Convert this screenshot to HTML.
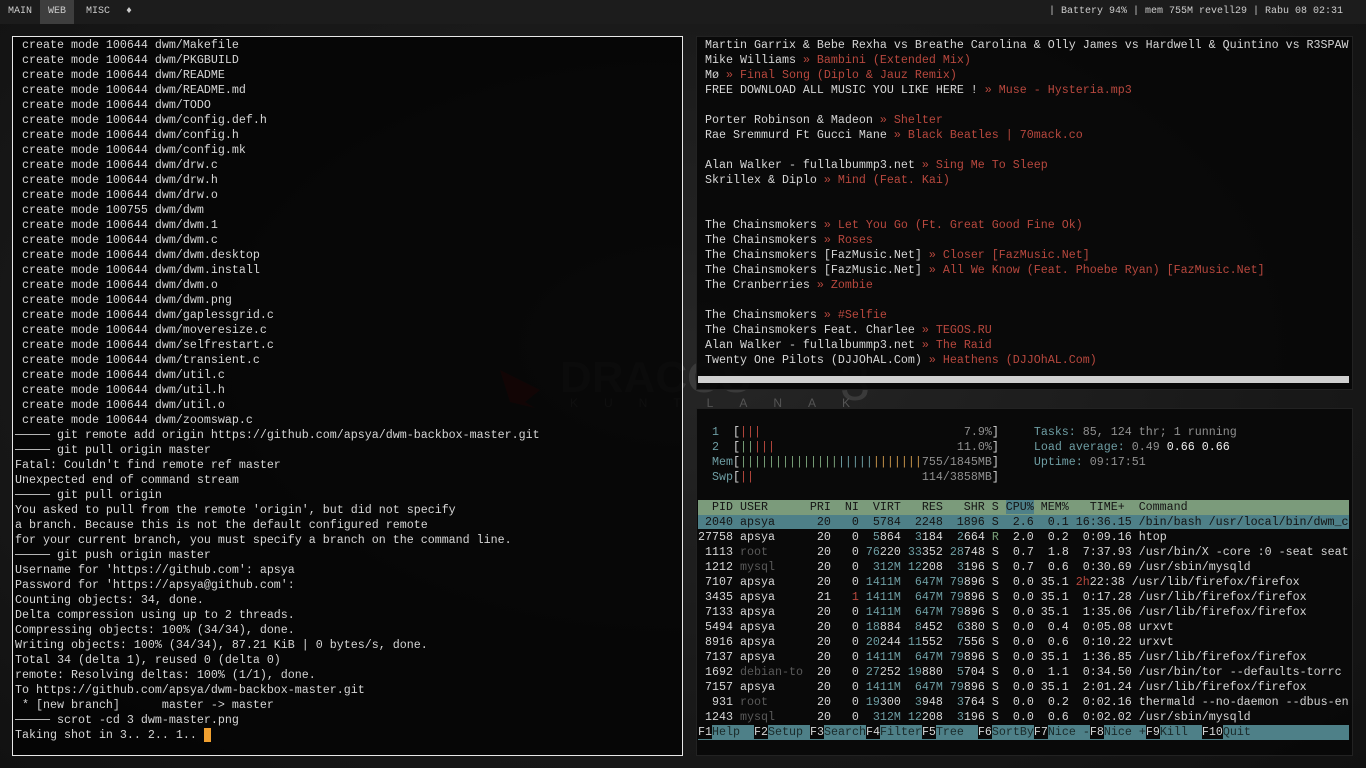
<!DOCTYPE html>
<html><head><meta charset="utf-8"><style>
*{margin:0;padding:0;box-sizing:border-box}
body{width:1366px;height:768px;overflow:hidden;background:radial-gradient(ellipse at 50% 45%,#262626 0%,#1a1a1a 55%,#111 100%);font-family:"Liberation Mono","DejaVu Sans Mono",monospace;position:relative;color:#d6d6d6}
.bar{position:absolute;left:0;top:0;width:1366px;height:24px;background:#1c1c1c;font-size:10px;line-height:24px;color:#ccc}
.bar span{position:absolute;top:0}
pre{font-family:"Liberation Mono","DejaVu Sans Mono",monospace;font-size:11.67px;line-height:15px;white-space:pre;position:absolute}
.logo{position:absolute;left:480px;top:350px;width:420px;height:60px}
.left{position:absolute;left:12px;top:36px;width:671px;height:720px;border:1px solid #e8e8e8;background:rgba(4,4,4,0.86)}
.rt{position:absolute;left:696px;top:36px;width:657px;height:354px;background:rgba(8,8,8,0.92);border:1px solid #222}
.rb{position:absolute;left:696px;top:408px;width:657px;height:348px;background:rgba(8,8,8,0.95);border:1px solid #222}
.r{color:#b8483e}.t{color:#6e9ea4}.g{color:#5a5a5a}.gr{color:#7ba37a}.w{color:#eee}.m{color:#909090}
.hdr{background:#7b9b7b;color:#141414}.sel{background:#4e8088;color:#141414}
.fk{background:#4e8088;color:#1a2a2a}
</style></head><body>
<div class="bar">
<span style="left:0;width:40px;text-align:center">MAIN</span>
<span style="left:40px;width:34px;background:#3e3e3e;text-align:center">WEB</span>
<span style="left:86px">MISC</span>
<span style="left:126px">♦</span>
<span style="left:1049px">| Battery 94%  | mem 755M revell29  | Rabu 08 02:31</span>
</div>
<svg class="logo" viewBox="0 0 420 60">
<path d="M20 20 L60 40 L45 52 L55 58 L30 52 Z" fill="#6a0f0f"/>
<text x="80" y="42" font-family="Liberation Sans" font-weight="bold" font-size="44" fill="#3a3a3a">DRACOS</text>
<text x="360" y="50" font-family="Liberation Sans" font-size="54" fill="#3a3a3a">3</text>
<text x="90" y="57" font-family="Liberation Sans" font-size="12" fill="#555" letter-spacing="26">KUNTLANAK</text>
</svg>
<div class="left"></div>
<pre style="left:15px;top:37.5px"> create mode 100644 dwm/Makefile
 create mode 100644 dwm/PKGBUILD
 create mode 100644 dwm/README
 create mode 100644 dwm/README.md
 create mode 100644 dwm/TODO
 create mode 100644 dwm/config.def.h
 create mode 100644 dwm/config.h
 create mode 100644 dwm/config.mk
 create mode 100644 dwm/drw.c
 create mode 100644 dwm/drw.h
 create mode 100644 dwm/drw.o
 create mode 100755 dwm/dwm
 create mode 100644 dwm/dwm.1
 create mode 100644 dwm/dwm.c
 create mode 100644 dwm/dwm.desktop
 create mode 100644 dwm/dwm.install
 create mode 100644 dwm/dwm.o
 create mode 100644 dwm/dwm.png
 create mode 100644 dwm/gaplessgrid.c
 create mode 100644 dwm/moveresize.c
 create mode 100644 dwm/selfrestart.c
 create mode 100644 dwm/transient.c
 create mode 100644 dwm/util.c
 create mode 100644 dwm/util.h
 create mode 100644 dwm/util.o
 create mode 100644 dwm/zoomswap.c
───── git remote add origin https://github.com/apsya/dwm-backbox-master.git
───── git pull origin master
Fatal: Couldn't find remote ref master
Unexpected end of command stream
───── git pull origin
You asked to pull from the remote 'origin', but did not specify
a branch. Because this is not the default configured remote
for your current branch, you must specify a branch on the command line.
───── git push origin master
Username for 'https://github.com': apsya
Password for 'https://apsya@github.com':
Counting objects: 34, done.
Delta compression using up to 2 threads.
Compressing objects: 100% (34/34), done.
Writing objects: 100% (34/34), 87.21 KiB | 0 bytes/s, done.
Total 34 (delta 1), reused 0 (delta 0)
remote: Resolving deltas: 100% (1/1), done.
To https://github.com/apsya/dwm-backbox-master.git
 * [new branch]      master -> master
───── scrot -cd 3 dwm-master.png
Taking shot in 3.. 2.. 1.. <span style="background:#f0a030"> </span></pre>
<div class="rt"></div>
<pre style="left:705px;top:37.5px">Martin Garrix &amp; Bebe Rexha vs Breathe Carolina &amp; Olly James vs Hardwell &amp; Quintino vs R3SPAW
Mike Williams <span class="r">» Bambini (Extended Mix)</span>
Mø <span class="r">» Final Song (Diplo &amp; Jauz Remix)</span>
FREE DOWNLOAD ALL MUSIC YOU LIKE HERE ! <span class="r">» Muse - Hysteria.mp3</span>

Porter Robinson &amp; Madeon <span class="r">» Shelter</span>
Rae Sremmurd Ft Gucci Mane <span class="r">» Black Beatles | 70mack.co</span>

Alan Walker - fullalbummp3.net <span class="r">» Sing Me To Sleep</span>
Skrillex &amp; Diplo <span class="r">» Mind (Feat. Kai)</span>


The Chainsmokers <span class="r">» Let You Go (Ft. Great Good Fine Ok)</span>
The Chainsmokers <span class="r">» Roses</span>
The Chainsmokers [FazMusic.Net] <span class="r">» Closer [FazMusic.Net]</span>
The Chainsmokers [FazMusic.Net] <span class="r">» All We Know (Feat. Phoebe Ryan) [FazMusic.Net]</span>
The Cranberries <span class="r">» Zombie</span>

The Chainsmokers <span class="r">» #Selfie</span>
The Chainsmokers Feat. Charlee <span class="r">» TEGOS.RU</span>
Alan Walker - fullalbummp3.net <span class="r">» The Raid</span>
Twenty One Pilots (DJJOhAL.Com) <span class="r">» Heathens (DJJOhAL.Com)</span></pre>
<div style="position:absolute;left:698px;top:376px;width:651px;height:7px;background:#d0d0d0"></div>
<div class="rb"></div>
<pre style="left:698px;top:424.5px">  <span class="t">1</span>  [<span class="r">|||</span>                             <span class="m">7.9%</span>]     <span class="t">Tasks: </span><span class="m">85, 124 thr; 1 running</span>
  <span class="t">2</span>  [<span class="gr">||</span><span class="r">|||</span>                          <span class="m">11.0%</span>]     <span class="t">Load average: </span><span class="m">0.49</span> <span class="w">0.66 0.66</span>
  <span class="t">Mem</span>[<span class="gr">||||||||||||||</span><span class="t">|||||</span><span style="color:#c8954a">|||||||</span><span class="m">755/1845MB</span>]     <span class="t">Uptime: </span><span class="m">09:17:51</span>
  <span class="t">Swp</span>[<span class="r">||</span>                        <span class="m">114/3858MB</span>]</pre>
<div style="position:absolute;left:698px;top:500px;width:651px;height:15px;background:#7b9b7b"></div>
<div style="position:absolute;left:698px;top:725px;width:651px;height:15px;background:#4e8088"></div>
<pre style="left:698px;top:499.5px"><span class="hdr">  PID USER      PRI  NI  VIRT   RES   SHR S </span><span class="sel">CPU%</span><span class="hdr"> MEM%   TIME+  Command                       </span>
<span class="sel"> 2040 apsya      20   0  5784  2248  1896 S  2.6  0.1 16:36.15 /bin/bash /usr/local/bin/dwm_c</span>
27758 apsya      20   0  <span class="t">5</span>864  <span class="t">3</span>184  <span class="t">2</span>664 <span class="gr">R</span>  2.0  0.2  0:09.16 htop
 1113 <span class="g">root     </span>  20   0 <span class="t">76</span>220 <span class="t">33</span>352 <span class="t">28</span>748 S  0.7  1.8  7:37.93 /usr/bin/X -core :0 -seat seat
 1212 <span class="g">mysql    </span>  20   0  <span class="t">312M</span> <span class="t">12</span>208  <span class="t">3</span>196 S  0.7  0.6  0:30.69 /usr/sbin/mysqld
 7107 apsya      20   0 <span class="t">1411M</span>  <span class="t">647M</span> <span class="t">79</span>896 S  0.0 35.1 <span class="r">2h</span>22:38 /usr/lib/firefox/firefox
 3435 apsya      21   <span class="r">1</span> <span class="t">1411M</span>  <span class="t">647M</span> <span class="t">79</span>896 S  0.0 35.1  0:17.28 /usr/lib/firefox/firefox
 7133 apsya      20   0 <span class="t">1411M</span>  <span class="t">647M</span> <span class="t">79</span>896 S  0.0 35.1  1:35.06 /usr/lib/firefox/firefox
 5494 apsya      20   0 <span class="t">18</span>884  <span class="t">8</span>452  <span class="t">6</span>380 S  0.0  0.4  0:05.08 urxvt
 8916 apsya      20   0 <span class="t">20</span>244 <span class="t">11</span>552  <span class="t">7</span>556 S  0.0  0.6  0:10.22 urxvt
 7137 apsya      20   0 <span class="t">1411M</span>  <span class="t">647M</span> <span class="t">79</span>896 S  0.0 35.1  1:36.85 /usr/lib/firefox/firefox
 1692 <span class="g">debian-to</span>  20   0 <span class="t">27</span>252 <span class="t">19</span>880  <span class="t">5</span>704 S  0.0  1.1  0:34.50 /usr/bin/tor --defaults-torrc
 7157 apsya      20   0 <span class="t">1411M</span>  <span class="t">647M</span> <span class="t">79</span>896 S  0.0 35.1  2:01.24 /usr/lib/firefox/firefox
  931 <span class="g">root     </span>  20   0 <span class="t">19</span>300  <span class="t">3</span>948  <span class="t">3</span>764 S  0.0  0.2  0:02.16 thermald --no-daemon --dbus-en
 1243 <span class="g">mysql    </span>  20   0  <span class="t">312M</span> <span class="t">12</span>208  <span class="t">3</span>196 S  0.0  0.6  0:02.02 /usr/sbin/mysqld
<span style="background:#080808">F1</span><span class="fk">Help  </span><span style="background:#080808">F2</span><span class="fk">Setup </span><span style="background:#080808">F3</span><span class="fk">Search</span><span style="background:#080808">F4</span><span class="fk">Filter</span><span style="background:#080808">F5</span><span class="fk">Tree  </span><span style="background:#080808">F6</span><span class="fk">SortBy</span><span style="background:#080808">F7</span><span class="fk">Nice -</span><span style="background:#080808">F8</span><span class="fk">Nice +</span><span style="background:#080808">F9</span><span class="fk">Kill  </span><span style="background:#080808">F10</span><span class="fk">Quit</span></pre>
</body></html>
